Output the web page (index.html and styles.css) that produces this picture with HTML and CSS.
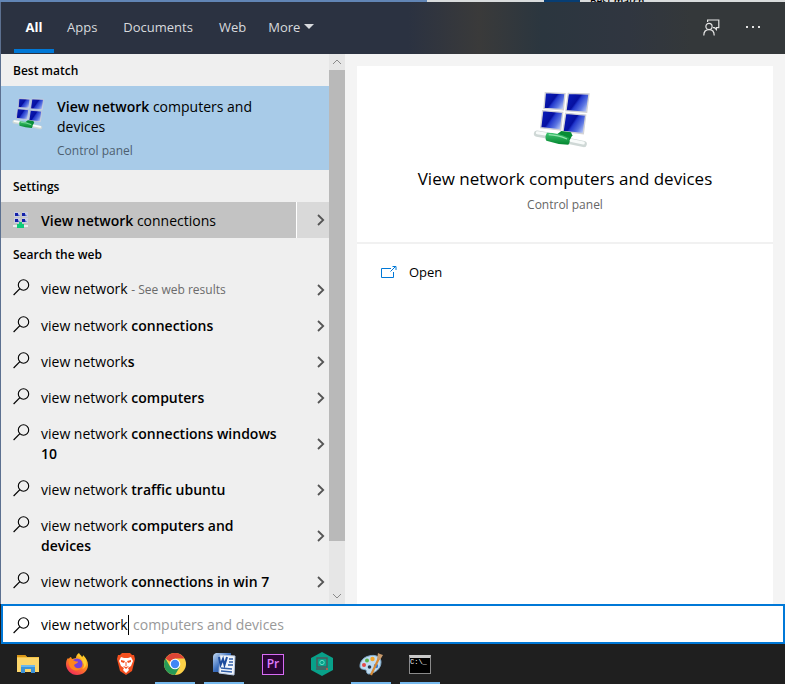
FILE: index.html
```html
<!DOCTYPE html>
<html lang="en">
	<head>
		<meta charset="UTF-8">
		<title>Search</title>
		<link rel="stylesheet" href="styles.css">
	</head>
	<body>
		<!-- shared icons -->
		<svg class="defs">
			<defs>
				<linearGradient id="screen" x1="0" y1="0.2" x2="1" y2="0.8">
					<stop offset="0" stop-color="#0a1cb8" />
					<stop offset="0.42" stop-color="#0610a0" />
					<stop offset="0.5" stop-color="#2238cc" />
					<stop offset="0.75" stop-color="#5c76e2" />
					<stop offset="1" stop-color="#c3d2f8" />
				</linearGradient>
				<linearGradient id="pipe" x1="0" y1="0" x2="0" y2="1">
					<stop offset="0" stop-color="#3fc571" />
					<stop offset="1" stop-color="#03862f" />
				</linearGradient>
				<linearGradient id="fox" x1="0.8" y1="0" x2="0.2" y2="1">
					<stop offset="0" stop-color="#ffe226" />
					<stop offset="0.45" stop-color="#ff8a1c" />
					<stop offset="1" stop-color="#f0225e" />
				</linearGradient>
				<linearGradient id="word" x1="0" y1="0" x2="1" y2="1">
					<stop offset="0" stop-color="#c5dcf5" />
					<stop offset="0.5" stop-color="#3c6fbd" />
					<stop offset="1" stop-color="#173f8b" />
				</linearGradient>
			</defs>
			<symbol id="network" viewBox="70 30 192 180">
				<g fill="url(#screen)" stroke="#d3d3d6" stroke-width="4">
					<path d="M107 38 L166 41 L161 89 L103 85 Z" />
					<path d="M176 40 L238 42 L231 97 L169 92 Z" />
					<path d="M99 92 L159 97 L153 150 L93 143 Z" />
					<path d="M168 100 L228 105 L221 161 L160 154 Z" />
				</g>
				<path d="M82 161 L116 167 M178 183 L222 192" stroke="#cfd8d6" stroke-width="19" stroke-linecap="round" />
				<path d="M83 158 L112 163 M182 181 L221 189" stroke="#f8fbfa" stroke-width="9" stroke-linecap="round" />
				<path d="M140 164 L155 153 L184 157 L188 166 L180 181 Z" fill="#078c36" />
				<path d="M112 158 Q145 158 177 173 Q184 184 176 194 Q142 193 110 182 Q104 169 112 158 Z" fill="url(#pipe)" />
				<path d="M117 164 Q145 165 172 177" stroke="#93e4ad" stroke-width="4" fill="none" />
			</symbol>
			<symbol id="network-small" viewBox="0 0 16 16">
				<path d="M1 0h6v5H1zM9 0h6v5H9zM1 6h6v5H1zM9 6h6v5H9z" fill="#c9cde0" />
				<path d="M2 1h3v3H2zM9 1h3v3H9zM2 7h3v3H2zM9 7h3v3H9z" fill="#1420a8" />
				<path d="M5 2l2 2H5zM12 2l2 2h-2zM5 8l2 2H5zM12 8l2 2h-2z" fill="#4d63c8" />
				<path d="M0 13h15v2H0z" fill="#e8eeec" />
				<path d="M6 10h3v2h2v4H4v-4h2z" fill="#0ccb79" />
			</symbol>
			<symbol id="search" viewBox="0 0 17 17">
				<circle cx="10.5" cy="6" r="5.2" fill="none" stroke="currentColor" stroke-width="1.1" />
				<path d="M6.9 9.7L0.6 16" stroke="currentColor" stroke-width="1.2" />
			</symbol>
			<symbol id="chevron" viewBox="0 0 8 12">
				<path d="M1 1l5.2 5L1 11" fill="none" stroke="currentColor" stroke-width="1.8" />
			</symbol>
		</svg>

		<div class="edge"><span>Best match</span></div>

		<header class="tabs">
			<nav>
				<button class="tab active">All</button>
				<button class="tab">Apps</button>
				<button class="tab">Documents</button>
				<button class="tab">Web</button>
				<button class="tab more">More <i class="caret-down"></i></button>
			</nav>
			<div class="tools">
				<button aria-label="Feedback">
					<svg width="17" height="17" viewBox="0 0 17 17" fill="none" stroke="#e4e4e4" stroke-width="1.2">
						<path d="M4.6 3V1h11.2v7.6h-2.4v2l-2-2H10" />
						<circle cx="6" cy="7.4" r="3.1" />
						<path d="M0.8 16.4c0-3.6 2-5.8 5.2-5.8s5.2 2.2 5.2 5.8" />
					</svg>
				</button>
				<button aria-label="Options">
					<svg width="16" height="4" viewBox="0 0 16 4" fill="#e4e4e4">
						<path d="M1 1h2v2H1zM7 1h2v2H7zM13 1h2v2h-2z" />
					</svg>
				</button>
			</div>
		</header>

		<main class="panes">
			<section class="results">
				<h2>Best match</h2>
				<a href="#" class="best">
					<svg width="36" height="34"><use href="#network" /></svg>
					<span>
						<span class="name"><b>View network</b> computers and devices</span>
						<span class="kind">Control panel</span>
					</span>
				</a>

				<h2>Settings</h2>
				<div class="setting">
					<a href="#">
						<svg width="16" height="16"><use href="#network-small" /></svg>
						<span class="text"><b>View network</b> connections</span>
					</a>
					<button class="expand" aria-label="Show details"><svg width="8" height="12"><use href="#chevron" /></svg></button>
				</div>

				<h2>Search the web</h2>
				<ul class="web">
					<li><a href="#"><svg class="glass"><use href="#search" /></svg><span class="text">view network <small>- See web results</small></span><svg class="arrow"><use href="#chevron" /></svg></a></li>
					<li><a href="#"><svg class="glass"><use href="#search" /></svg><span class="text">view network <b>connections</b></span><svg class="arrow"><use href="#chevron" /></svg></a></li>
					<li><a href="#"><svg class="glass"><use href="#search" /></svg><span class="text">view network<b>s</b></span><svg class="arrow"><use href="#chevron" /></svg></a></li>
					<li><a href="#"><svg class="glass"><use href="#search" /></svg><span class="text">view network <b>computers</b></span><svg class="arrow"><use href="#chevron" /></svg></a></li>
					<li><a href="#"><svg class="glass"><use href="#search" /></svg><span class="text">view network <b>connections windows 10</b></span><svg class="arrow"><use href="#chevron" /></svg></a></li>
					<li><a href="#"><svg class="glass"><use href="#search" /></svg><span class="text">view network <b>traffic ubuntu</b></span><svg class="arrow"><use href="#chevron" /></svg></a></li>
					<li><a href="#"><svg class="glass"><use href="#search" /></svg><span class="text">view network <b>computers and devices</b></span><svg class="arrow"><use href="#chevron" /></svg></a></li>
					<li><a href="#"><svg class="glass"><use href="#search" /></svg><span class="text">view network <b>connections in win 7</b></span><svg class="arrow"><use href="#chevron" /></svg></a></li>
				</ul>
			</section>

			<div class="scrollbar">
				<svg width="16" height="16" viewBox="0 0 16 16" fill="none" stroke="#8a8a8a"><path d="M4 10l4-4 4 4" /></svg>
				<div class="track"><div class="thumb"></div></div>
				<svg width="16" height="16" viewBox="0 0 16 16" fill="none" stroke="#8a8a8a"><path d="M4 6l4 4 4-4" /></svg>
			</div>

			<section class="preview">
				<div class="card">
					<div class="summary">
						<svg width="64" height="60"><use href="#network" /></svg>
						<h1>View network computers and devices</h1>
						<p>Control panel</p>
					</div>
					<a href="#" class="open">
						<svg width="16" height="13" viewBox="0 0 16 13" fill="none" stroke="#0078d7">
							<path d="M10 2.5H0.5v9h12V6" />
							<path d="M9.5 5.5l5-5M11.5 0.5h3.5v3.5" />
						</svg>
						Open
					</a>
				</div>
			</section>
		</main>

		<form class="searchbox">
			<label for="query" aria-label="Search"><svg class="glass"><use href="#search" /></svg></label>
			<input type="text" id="query" value="view network" autocomplete="off">
			<span class="cursor"></span>
			<span class="hint">computers and devices</span>
		</form>

		<footer class="taskbar">
			<button aria-label="File Explorer">
				<svg width="22" height="22" viewBox="0 0 22 22">
					<path d="M0 2h8l2 2h12v15H0z" fill="#f6c445" />
					<path d="M0 2h8l2 2H0z" fill="#d99617" />
					<path d="M0 5h22v14H0z" fill="#fcd66c" />
					<path d="M4 20v-8h14v8h-4v-4H8v4z" fill="#3b93da" />
					<path d="M4 12h14v2H4z" fill="#6cb8ee" />
				</svg>
			</button>
			<button aria-label="Firefox">
				<svg width="24" height="24" viewBox="0 0 24 24">
					<path d="M14 1c1 2 2 2 3 4 1-1 1-1 1-2 3 3 5 6 5 10 0 6-5 10-11 10S1 18 1 12c0-3 1-5 2-6l1 1c0-1 1-2 2-2l1 2 4-1c0-2 1-4 3-5z" fill="url(#fox)" />
					<circle cx="12" cy="12" r="5.5" fill="#7540d9" />
					<path d="M4 8c2-1 4 0 6 1 1 1 3 0 3 1s-3 2-4 3c1 4 5 4 8 2-2 4-9 5-12 0-1-2-2-4-1-7z" fill="#ff861b" />
					<path d="M13 2c0 3 5 4 5 9 2 1 1 5-1 6 4-1 6-6 3-11-1 0-1 1-2 1-1-2-3-3-5-5z" fill="#ffcc32" />
				</svg>
			</button>
			<button aria-label="Brave">
				<svg width="20" height="24" viewBox="0 0 20 24">
					<path d="M6 1h8l2 2h2l1 4-1 4-2 8-6 4-6-4-2-8-1-4 1-4h2z" fill="#f4501f" />
					<path d="M5 5l3 1h4l3-1 2 4-2 5-3 2 1 2-3 3-3-3 1-2-3-2-2-5z" fill="#fff" />
					<path d="M5 8l4 1-1 2-3-1zM15 8l-4 1 1 2 3-1zM7 14l3 1 3-1-3 3zM9.5 10h1v4h-1z" fill="#f4501f" />
				</svg>
			</button>
			<button class="running" aria-label="Chrome">
				<svg width="22" height="22" viewBox="0 0 22 22">
					<circle cx="11" cy="11" r="11" fill="#fcd147" />
					<path d="M1.5 5.5A11 11 0 0 0 11 22l4.8-8.2L11 11 6.2 13.8z" fill="#279a57" />
					<path d="M1.5 5.5A11 11 0 0 1 20.5 5.5H11L6.5 9z" fill="#de4536" />
					<circle cx="11" cy="11" r="5.3" fill="#fff" />
					<circle cx="11" cy="11" r="4.2" fill="#4286f5" />
				</svg>
			</button>
			<button class="running" aria-label="Word">
				<svg width="24" height="24" viewBox="0 0 24 24">
					<path d="M4 1h15l-1 19H1V5q0-3 3-4z" fill="url(#word)" />
					<path d="M8 3l15 1-1 19-15-2z" fill="#f2f6fc" stroke="#b7c9e4" />
					<path d="M17 7h4M17 10h4M16 13h5M9 16l11 1M9 19l11 1" stroke="#315fa8" stroke-width="1.4" />
					<path d="M7 5l1.5 8L11 7l1.5 6L15 5" fill="none" stroke="#1d4c9d" stroke-width="2" />
				</svg>
			</button>
			<button aria-label="Premiere Pro"><span class="premiere">Pr</span></button>
			<button aria-label="Remote desktop">
				<svg width="22" height="24" viewBox="0 0 22 24">
					<path d="M11 0l11 6v12l-11 6-11-6V6z" fill="#08a18a" />
					<path d="M6 6h10v9H6zM5 17h12" fill="none" stroke="#4b5b5d" stroke-width="1.5" />
					<circle cx="11" cy="10.5" r="2.2" fill="#08a18a" stroke="#62dec5" />
					<path d="M15 17h2" stroke="#d35a45" stroke-width="1.5" />
				</svg>
			</button>
			<button class="running" aria-label="Paint">
				<svg width="24" height="24" viewBox="0 0 24 24">
					<path d="M10 4c6-2 12 1 12 6 0 7-6 11-12 12-3 0-2-3-3-4-2-1-6 0-6-4 0-5 4-9 9-10z" fill="#bfdcf0" stroke="#7fa9ca" />
					<circle cx="5" cy="13" r="2" fill="#e34848" />
					<circle cx="8" cy="8.5" r="2" fill="#58b14b" />
					<circle cx="13.5" cy="7" r="2.2" fill="#f3a52b" />
					<circle cx="10.5" cy="15" r="1.8" fill="#25364d" />
					<circle cx="17" cy="14" r="2.2" fill="#3179d0" />
					<path d="M20 6L12 23" stroke="#d68a36" stroke-width="2.2" />
					<path d="M18 7l1-6 2 1 3 1-3 5z" fill="#c99a6b" />
				</svg>
			</button>
			<button class="running" aria-label="Command Prompt"><span class="cmd">C:\_</span></button>
		</footer>
	</body>
</html>
```

FILE: styles.css
```css
* {
	margin: 0;
	padding: 0;
	box-sizing: border-box;
}
body {
	min-height: 100vh;
	display: flex;
	flex-direction: column;
	font: 14px/20px "Open Sans", "Noto Sans", sans-serif;
	color: #000;
	background: #1f1f1f;
}
a {
	color: inherit;
	text-decoration: none;
}
ul {
	list-style: none;
}
b {
	font-weight: 600;
}
svg {
	display: block;
	flex: none;
}
button {
	border: none;
	background: none;
	font: inherit;
	color: inherit;
}
.defs {
	position: absolute;
	width: 0;
	height: 0;
}

/* strip of the window behind */
.edge {
	height: 2px;
	padding-left: 590px;
	overflow: hidden;
	font-size: 10px;
	font-weight: 600;
	line-height: 2px;
	background: linear-gradient(90deg, #6185b5 427px, #d9dcdd 427px, #d9dcdd 544px, #073e74 544px, #073e74 580px, #d9dcdd 580px);
}

/* top tabs */
.tabs {
	height: 52px;
	display: flex;
	justify-content: space-between;
	border-left: 1px solid #5c7090;
	background: linear-gradient(90deg, #2b3241 0, #2b3241 52%, #3a3a3a 61%, #2b363f 69%, #303640 80%, #34383a 88%, #34383a 100%);
	color: #d8dade;
	font-size: 13px;
}
.tabs nav {
	display: flex;
	padding-left: 13px;
}
.tab {
	padding: 0 13px 2px;
	border-bottom: 4px solid transparent;
	border-top: 4px solid transparent;
	margin-bottom: 1px;
}
.tab.active {
	width: 40px;
	padding: 0 0 2px;
	font-weight: 700;
	color: #fff;
	border-bottom-color: #0078d7;
}
.more {
	display: flex;
	align-items: center;
	gap: 4px;
	padding-left: 9px;
}
.caret-down {
	border: 5px solid transparent;
	border-top-color: #d8dade;
	border-bottom: none;
}
.tools {
	display: flex;
	align-items: center;
	gap: 25px;
	padding: 0 24px 2px 0;
}

/* body */
.panes {
	flex: 1;
	display: flex;
	background: #f4f4f4;
	border-left: 1px solid #5c7090;
}
.results {
	width: 328px;
	background: #efefef;
}
.results h2 {
	padding: 7px 12px 5px;
	font-size: 12px;
	font-weight: 600;
}
.best {
	display: flex;
	gap: 9px;
	padding: 11px 40px 9px 11px;
	background: #a8cbe8;
}
.best .name {
	display: block;
	margin-bottom: 4px;
}
.best .kind {
	display: block;
	font-size: 12px;
	color: #4d5f70;
}
.setting {
	display: flex;
	height: 36px;
}
.setting a {
	flex: 1;
	display: flex;
	align-items: center;
	gap: 12px;
	padding-left: 12px;
	background: #c3c3c3;
}
.setting .text {
	padding-top: 2px;
}
.expand {
	width: 33px;
	padding-left: 20px;
	border-left: 1px solid #fff;
	background: #d9d9d9;
	color: #555;
}
.web a {
	display: flex;
	align-items: center;
	padding: 8px 4px 8px 12px;
}
.web li:first-child a {
	padding-top: 9px;
}
.glass {
	width: 17px;
	height: 17px;
}
.web .glass {
	align-self: flex-start;
	margin-right: 11px;
}
.web .text {
	width: 252px;
	padding-right: 10px;
}
.web small {
	font-size: 12px;
	color: #6b6b6b;
}
.arrow {
	width: 8px;
	height: 12px;
	margin-left: auto;
	color: #555;
}

.scrollbar {
	width: 16px;
	display: flex;
	flex-direction: column;
	background: #e6e6e6;
}
.track {
	flex: 1;
}
.thumb {
	height: 91%;
	background: #b9b9b9;
}

.preview {
	flex: 1;
	display: flex;
	padding: 12px 12px 0;
}
.card {
	flex: 1;
	background: #fff;
}
.summary {
	display: flex;
	flex-direction: column;
	align-items: center;
	padding: 24px 12px 27px;
	border-bottom: 2px solid #f1f1f1;
}
.summary h1 {
	margin-top: 17px;
	font-size: 17px;
	line-height: 24px;
	font-weight: 400;
}
.summary p {
	margin-top: 4px;
	font-size: 12px;
	color: #666;
}
.open {
	display: flex;
	align-items: center;
	gap: 12px;
	padding: 18px 24px;
	font-size: 13px;
}

/* search field */
.searchbox {
	height: 40px;
	display: flex;
	align-items: center;
	padding: 2px 0 0 10px;
	margin-left: 1px;
	border: 2px solid #0078d7;
	background: #fff;
}
.searchbox label {
	margin-right: 11px;
}
.searchbox input {
	width: 87px;
	border: none;
	outline: none;
	font: inherit;
	background: none;
}
.cursor {
	width: 1px;
	height: 20px;
	background: #000;
}
.hint {
	margin-left: 4px;
	color: #999;
}

/* taskbar */
.taskbar {
	height: 40px;
	display: flex;
	gap: 9px;
	padding-left: 8px;
	background: #1f1f1f;
}
.taskbar button {
	width: 40px;
	display: flex;
	align-items: center;
	justify-content: center;
	border-top: 2px solid transparent;
	border-bottom: 2px solid transparent;
}
.taskbar .running {
	border-bottom-color: #76b9ed;
}
.premiere {
	width: 22px;
	height: 21px;
	border: 1px solid #d86cf5;
	background: #2a0634;
	color: #e07cff;
	font-size: 12px;
	font-weight: 600;
	line-height: 18px;
}
.cmd {
	width: 22px;
	height: 19px;
	border: 1px solid #8a8a8a;
	border-top: 3px solid #c9c9c9;
	background: #000;
	color: #fff;
	font: 7px/8px "Liberation Mono", monospace;
	text-align: left;
}
```
